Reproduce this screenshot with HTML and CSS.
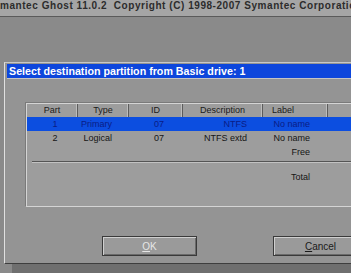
FILE: index.html
```html
<!DOCTYPE html>
<html lang="en">
<head>
    <meta charset="UTF-8">
    <meta name="viewport" content="width=device-width, initial-scale=1.0">
    <title>Symantec Ghost</title>
    <link rel="stylesheet" href="styles.css">
</head>
<body>
    <div class="topbar"><span class="topbar-text">mantec Ghost 11.0.2  Copyright (C) 1998-2007 Symantec Corporation</span></div>

    <div class="desk">
        <div class="dialog">
            <div class="dialog-title">Select destination partition from Basic drive: 1</div>
            <div class="dialog-body">
                <div class="panel">
                    <div class="row head">
                        <div class="cell c-part">Part</div>
                        <div class="cell c-type">Type</div>
                        <div class="cell c-id">ID</div>
                        <div class="cell c-desc">Description</div>
                        <div class="cell c-label">Label</div>
                        <div class="cell c-rest"></div>
                    </div>
                    <div class="row selected">
                        <div class="cell c-part">1</div>
                        <div class="cell c-type">Primary</div>
                        <div class="cell c-id">07</div>
                        <div class="cell c-desc">NTFS</div>
                        <div class="cell c-label">No name</div>
                        <div class="cell"></div>
                    </div>
                    <div class="row">
                        <div class="cell c-part">2</div>
                        <div class="cell c-type">Logical</div>
                        <div class="cell c-id">07</div>
                        <div class="cell c-desc">NTFS extd</div>
                        <div class="cell c-label">No name</div>
                        <div class="cell"></div>
                    </div>
                    <div class="row">
                        <div class="cell"></div>
                        <div class="cell"></div>
                        <div class="cell"></div>
                        <div class="cell"></div>
                        <div class="cell c-label">Free</div>
                        <div class="cell"></div>
                    </div>
                    <div class="divider"></div>
                    <div class="row total-row">
                        <div class="cell"></div>
                        <div class="cell"></div>
                        <div class="cell"></div>
                        <div class="cell"></div>
                        <div class="cell c-label">Total</div>
                        <div class="cell"></div>
                    </div>
                </div>

                <div class="buttons">
                    <button class="btn btn-ok"><u>O</u>K</button>
                    <button class="btn btn-cancel"><u>C</u>ancel</button>
                </div>
            </div>
        </div>
    </div>
</body>
</html>
```

FILE: styles.css
```css
body {
    margin: 0;
    padding: 0;
    width: 351px;
    height: 273px;
    overflow: hidden;
    background-color: #8a8a8a;
    font-family: "Liberation Sans", Arial, sans-serif;
    color: #151515;
}

.topbar {
    height: 16px;
    overflow: hidden;
    background-color: #a5a5a5;
    border-bottom: 1px solid #5a5a5a;
    white-space: pre;
}

.topbar-text {
    display: block;
    margin-top: -2px;
    font-size: 10px;
    font-weight: bold;
    line-height: 15px;
    letter-spacing: 0.55px;
    color: #2c2c2c;
}

.desk {
    padding: 45px 0 0 4px;
}

.dialog {
    width: 420px;
    height: 200px;
    background-color: #949494;
    border-top: 1px solid #c8c8c8;
    border-left: 1px solid #e0e0e0;
    border-bottom: 1px solid #3e3e3e;
    box-shadow: 8px 10px 0 #6f6f6f;
}

.dialog-title {
    margin: 1px 0 0 2px;
    height: 14px;
    padding-left: 2px;
    background-color: #0d46dc;
    border-bottom: 1px solid #c4c4c4;
    color: #fff;
    font-size: 10.7px;
    font-weight: bold;
    line-height: 14px;
}

.dialog-body {
    padding: 24px 0 0 21px;
}

.panel {
    width: 400px;
    height: 102px;
    background-color: #9d9d9d;
    border: 1px solid #d4d4d4;
    box-shadow: -1px -1px 0 #7a7a7a;
    font-size: 9px;
}

.row {
    display: grid;
    grid-template-columns: 51px 51px 54px 80px 65px 1fr;
    height: 14px;
    line-height: 14px;
}

.cell {
    box-sizing: border-box;
    white-space: nowrap;
}

.head {
    height: 13px;
    line-height: 13px;
    color: #1a1a1a;
}

.head .cell {
    text-align: center;
    border-right: 1px solid #5c5c5c;
    box-shadow: inset -1px 0 0 #bdbdbd;
}

.head .c-rest {
    border-right: none;
    box-shadow: none;
}

.c-part { text-align: center; padding-left: 5px; }
.c-type { text-align: right; padding-right: 17px; }
.c-id { text-align: right; padding-right: 19px; }
.c-desc { text-align: right; padding-right: 16px; }
.c-label { text-align: right; padding-right: 18px; }

.head .c-part { padding-left: 0; }
.head .c-type,
.head .c-id,
.head .c-desc { padding-right: 0; }

.head .c-label {
    text-align: left;
    padding: 0 0 0 9px;
}

.selected {
    background-color: #0c4ee0;
    color: #0a1c86;
}

.divider {
    margin: 2px 0 0 5px;
    height: 1px;
    background-color: #555;
    border-bottom: 1px solid #c2c2c2;
}

.total-row {
    margin-top: 7px;
}

.buttons {
    display: flex;
    gap: 76px;
    margin: 29px 0 0 76px;
}

.btn {
    width: 95px;
    height: 20px;
    padding: 0;
    background-color: #9a9a9a;
    border: 1px solid #3a3a3a;
    box-shadow: inset 1px 1px 0 #cfcfcf, inset -1px -1px 0 #6a6a6a;
    font-family: "Liberation Sans", Arial, sans-serif;
    font-size: 10px;
    color: #1a1a1a;
}

.btn-ok {
    color: #e6e6e6;
}
```
